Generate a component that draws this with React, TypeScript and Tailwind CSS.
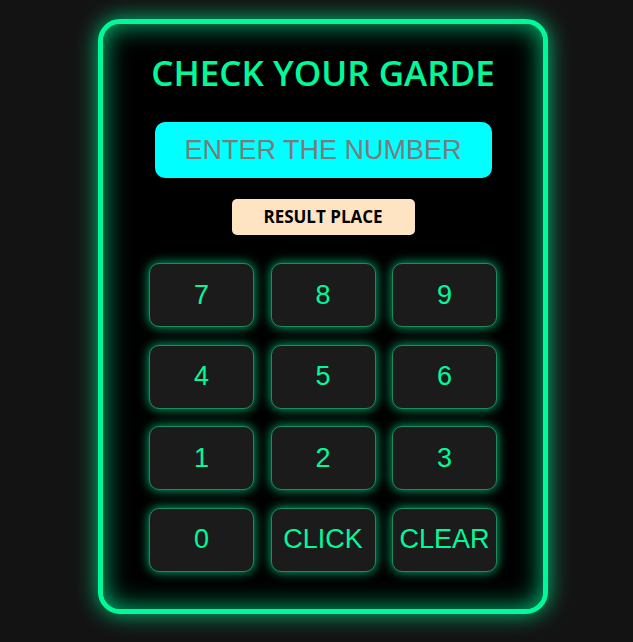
import React, { useState } from 'react';

const keys = ['7', '8', '9', '4', '5', '6', '1', '2', '3', '0', 'CLICK', 'CLEAR'];

const Key: React.FC<{ label: string; onPress: () => void }> = ({ label, onPress }) => (
  <button
    onClick={onPress}
    className="h-[64px] w-[105px] rounded-[10px] border border-[#1f8a5c] bg-[#1b1b1b] text-[27px] leading-none text-[#00fa9a] shadow-[0_0_11px_#00b874] [font-family:'Liberation_Sans',Arial,sans-serif]"
  >
    {label}
  </button>
);

export default function App() {
  const [value, setValue] = useState('');
  const [result, setResult] = useState('RESULT PLACE');

  const press = (k: string) => {
    if (k === 'CLEAR') {
      setValue('');
      setResult('RESULT PLACE');
    } else if (k === 'CLICK') {
      const n = Number(value);
      if (value === '' || isNaN(n)) return setResult('RESULT PLACE');
      setResult(n >= 80 ? 'GRADE A' : n >= 60 ? 'GRADE B' : n >= 40 ? 'GRADE C' : 'FAIL');
    } else {
      setValue(value + k);
    }
  };

  return (
    <div className="min-h-screen bg-[#131313] pt-[19px]">
      <div className="ml-[98px] flex h-[595px] w-[450px] flex-col items-center rounded-[22px] border-[5px] border-[#00fa9a] bg-black shadow-[0_0_22px_#00c27a,inset_0_0_26px_#00c27a]">
        <h1 className="mt-[29px] text-[35px] font-semibold leading-[40px] text-[#00fa9a] [font-family:'Open_Sans',sans-serif]">
          CHECK YOUR GARDE
        </h1>
        <input
          value={value}
          onChange={(e) => setValue(e.target.value)}
          placeholder="ENTER THE NUMBER"
          className="mt-[29px] h-[56px] w-[337px] rounded-[10px] bg-[#00ffff] text-center text-[27px] text-black outline-none placeholder:text-[#7b7b7b] [font-family:'Liberation_Sans',Arial,sans-serif]"
        />
        <div className="mt-[21px] flex h-[36px] w-[183px] items-center justify-center rounded-[5px] bg-[#ffe4c4] text-[17px] font-bold text-black [font-family:'Open_Sans',sans-serif]">
          {result}
        </div>
        <div className="mt-[28px] grid grid-cols-[105px_105px_105px] gap-x-[16.5px] gap-y-[17.5px]">
          {keys.map((k) => (
            <Key key={k} label={k} onPress={() => press(k)} />
          ))}
        </div>
      </div>
    </div>
  );
}
